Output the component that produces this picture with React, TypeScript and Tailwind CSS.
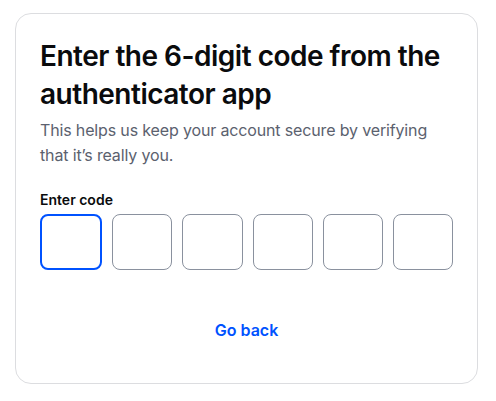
export default function App() {
  return (
    <div
      className="min-h-screen bg-white px-[15px] pt-[13px]"
      style={{ fontFamily: "Inter, 'Noto Sans', sans-serif" }}
    >
      <div className="flex h-[371px] w-[463px] flex-col rounded-2xl border border-[#dcdde0] px-[24px] pt-[23px]">
        <h1 className="text-[28px] font-semibold leading-[38px] tracking-[-0.5px] text-[#0a0b0d]">
          Enter the 6-digit code from the authenticator app
        </h1>
        <p className="mt-[5px] text-[16px] leading-[25px] tracking-[-0.15px] text-[#5b616e]">
          This helps us keep your account secure by verifying that it’s really you.
        </p>
        <label className="mt-[22px] text-[14px] font-semibold leading-[20px] text-[#0a0b0d]">
          Enter code
        </label>
        <div className="mt-[4px] flex gap-[10px]">
          {[0, 1, 2, 3, 4, 5].map((i) => (
            <input
              key={i}
              maxLength={1}
              className={
                i === 0
                  ? "h-[56px] w-0 flex-1 rounded-lg border-2 border-[#0052ff] text-center outline-none"
                  : "h-[56px] w-0 flex-1 rounded-lg border border-[#8a919e] text-center outline-none"
              }
            />
          ))}
        </div>
        <div className="mt-[48px] flex justify-center">
          <button className="text-[16px] font-semibold leading-[24px] text-[#0052ff]">Go back</button>
        </div>
      </div>
    </div>
  );
}
